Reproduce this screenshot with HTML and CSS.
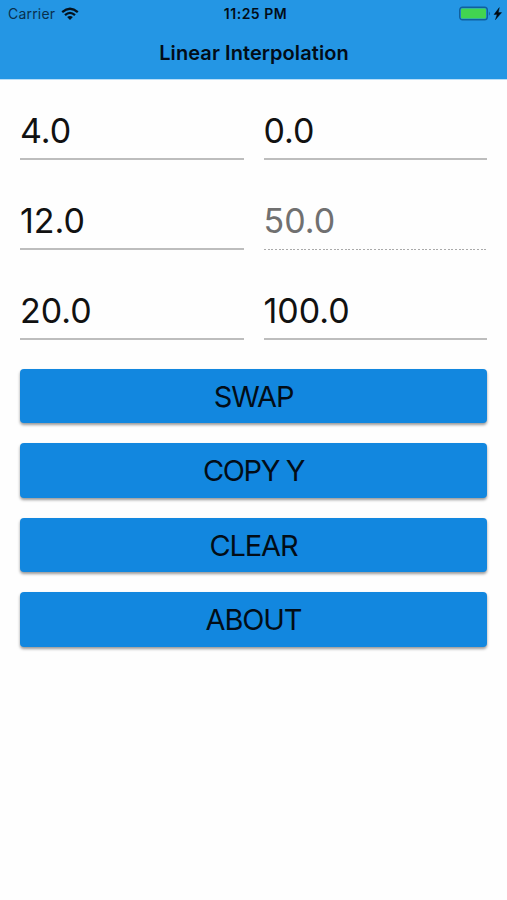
FILE: index.html
```html
<!DOCTYPE html>
<html lang="en">
<head>
<meta charset="utf-8">
<title>Linear Interpolation</title>
<link rel="stylesheet" href="styles.css">
</head>
<body>
<header class="header">
  <div class="status">
    <div class="status-left">
      <span class="carrier">Carrier</span>
      <svg class="wifi" width="18" height="14" viewBox="0 0 18 14" fill="none" stroke="#04121d" stroke-width="2.3">
        <path d="M1.2 5.2Q9 -1.6 16.8 5.2"/>
        <path d="M4 8.1Q9 3.7 14 8.1"/>
        <path d="M9 13L6.1 10.1Q9 7.7 11.9 10.1Z" fill="#04121d" stroke="none"/>
      </svg>
    </div>
    <time class="clock">11:25 PM</time>
    <svg class="battery" width="45" height="16" viewBox="0 0 45 16">
      <rect x="1.7" y="1.2" width="27.6" height="12.6" rx="2.8" fill="none" stroke="#11609d" stroke-width="1.4"/>
      <rect x="3" y="2.5" width="25" height="10" rx="1" fill="#42d451"/>
      <path d="M30.9 5.4Q32.9 7.5 30.9 9.8Z" fill="#11609d"/>
      <path d="M41.3 1.6L36 8.5H39.1L37.4 13.8L43.6 6.6H40.3Z" fill="#020a12" stroke="#020a12" stroke-width=".4"/>
    </svg>
  </div>
  <h1 class="title">Linear Interpolation</h1>
</header>
<main class="content">
  <div class="fields">
    <div class="field">4.0</div>
    <div class="field">0.0</div>
    <div class="field">12.0</div>
    <div class="field field-disabled">50.0</div>
    <div class="field">20.0</div>
    <div class="field">100.0</div>
  </div>
  <div class="actions">
    <button class="action swap">SWAP</button>
    <button class="action copy">COPY Y</button>
    <button class="action clear">CLEAR</button>
    <button class="action about">ABOUT</button>
  </div>
</main>
</body>
</html>
```
FILE: styles.css
```css
* { box-sizing: border-box; }
body {
  margin: 0;
  min-height: 900px;
  background: #fefefe;
  color: #111;
  font-family: Inter, "Liberation Sans", sans-serif;
}
.header {
  height: 79px;
  background: #2496e4;
  box-shadow: 0 1px 0 #b9def7;
  color: #020d17;
}
.status {
  display: grid;
  grid-template-columns: 1fr auto 1fr;
  align-items: center;
  height: 27px;
  padding: 0 4px 0 8px;
}
.status-left { display: flex; align-items: center; gap: 6px; }
.carrier { font-size: 14px; line-height: 27px; letter-spacing: 0.2px; color: #09304e; }
.clock { font-size: 14px; font-weight: 600; letter-spacing: 0.5px; }
.battery { justify-self: end; }
.title {
  margin: 0;
  padding: 1px 0 0 1px;
  font-size: 20px;
  font-weight: 600;
  line-height: 50px;
  letter-spacing: 0.08px;
  text-align: center;
}
.content { padding: 0 20px; }
.fields {
  display: grid;
  grid-template-columns: 1fr 1fr;
  grid-auto-rows: 60px;
  gap: 30px 20px;
  padding-top: 21px;
}
.field {
  border-bottom: 2px solid #bdbdbd;
  font-size: 34px;
  line-height: 62px;
}
.field-disabled {
  border-bottom: 0;
  background: repeating-linear-gradient(90deg, #aaa 0 2px, transparent 2px 3.67px) 0 100% / 222px 1.5px no-repeat;
  color: #707070;
}
.actions { display: grid; gap: 20px; padding-top: 28.9px; }
.action {
  height: 54.5px;
  padding: 1px 0 0;
  border: 0;
  border-radius: 4px;
  background: #1287df;
  box-shadow: 0 2px 3px rgba(0, 0, 0, 0.4);
  color: #020d17;
  font: 400 29px/54px Inter, "Liberation Sans", sans-serif;
  letter-spacing: -1.1px;
}
.copy { letter-spacing: -1.4px; }
```
